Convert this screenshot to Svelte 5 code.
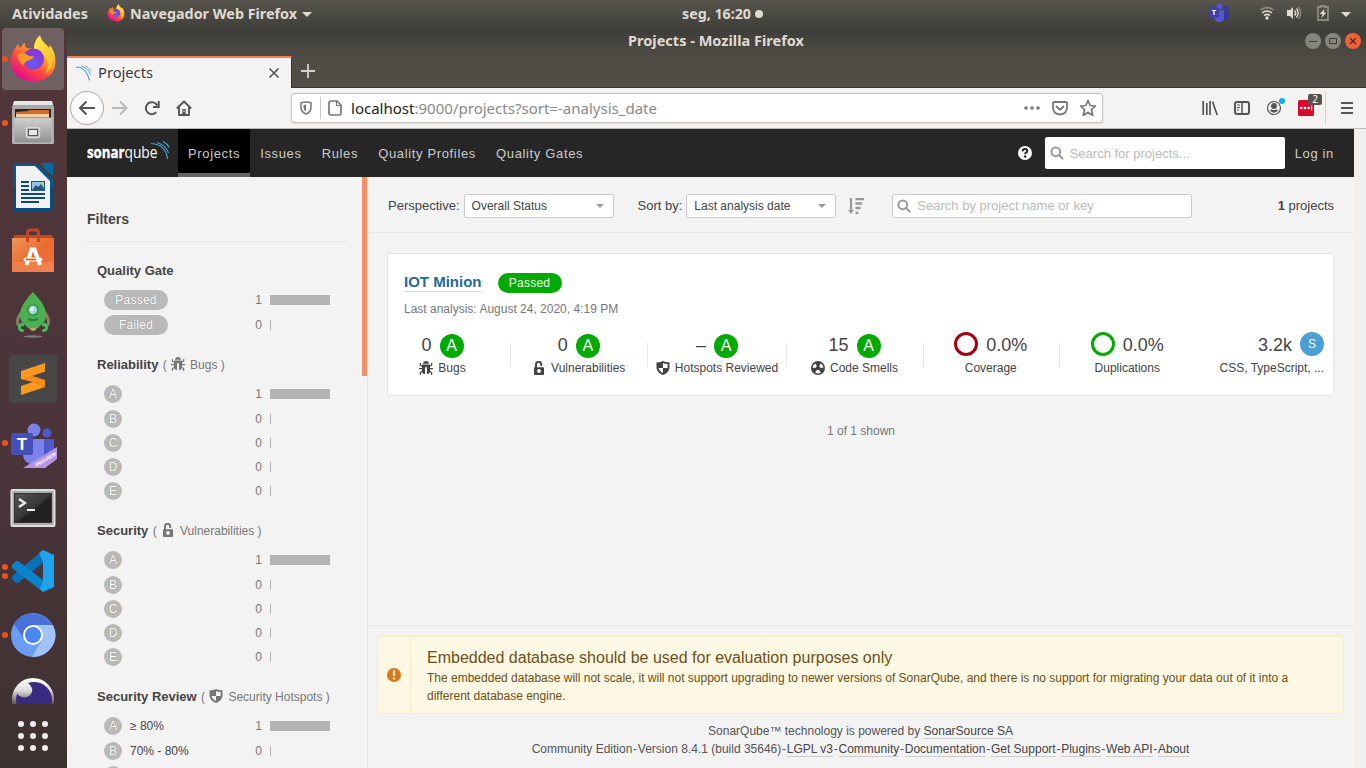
<script>
  const nav = ['Projects', 'Issues', 'Rules', 'Quality Profiles', 'Quality Gates'];
  const letters = ['A', 'B', 'C', 'D', 'E'];
  const ratingRows = letters.map((l, i) => ({ rating: l, count: i === 0 ? 1 : 0 }));
  const facets = [
    { title: 'Quality Gate', rows: [{ level: 'Passed', count: 1 }, { level: 'Failed', count: 0 }] },
    { title: 'Reliability', icon: 'bug', metric: 'Bugs', rows: ratingRows },
    { title: 'Security', icon: 'lock', metric: 'Vulnerabilities', rows: ratingRows },
    {
      title: 'Security Review', icon: 'shield', metric: 'Security Hotspots',
      rows: [
        { rating: 'A', label: '≥ 80%', count: 1 },
        { rating: 'B', label: '70% - 80%', count: 0 },
        { partial: true }
      ]
    }
  ];
  const measures = [
    { value: '0', rating: 'A', icon: 'bug', label: 'Bugs' },
    { value: '0', rating: 'A', icon: 'lock', label: 'Vulnerabilities' },
    { value: '–', rating: 'A', icon: 'shield', label: 'Hotspots Reviewed' },
    { value: '15', rating: 'A', icon: 'smell', label: 'Code Smells' },
    { value: '0.0%', ring: '#a4030f', label: 'Coverage' },
    { value: '0.0%', ring: '#00aa00', label: 'Duplications' }
  ];
  const links = ['LGPL v3', 'Community', 'Documentation', 'Get Support', 'Plugins', 'Web API', 'About'];
  const dock = [
    { name: 'firefox', dots: 1, active: true },
    { name: 'files', dots: 1 },
    { name: 'writer', dots: 0 },
    { name: 'software', dots: 0 },
    { name: 'rocket', dots: 0 },
    { name: 'sublime', dots: 0 },
    { name: 'teams', dots: 1 },
    { name: 'terminal', dots: 0 },
    { name: 'code', dots: 2 },
    { name: 'chromium', dots: 1 },
    { name: 'eclipse', dots: 0 }
  ];
</script>

{#snippet sysText(text, width, size, weight, color)}
  <svg class="systext" {width} height="20" role="img">
    <text x="0" y="14.500" textLength={width} lengthAdjust="spacingAndGlyphs" font-size={size} font-weight={weight} fill={color}>{text}</text>
  </svg>
{/snippet}

{#snippet firefox(size)}
  <svg width={size} height={size} viewBox="0 0 48 48">
    <defs>
      <linearGradient id="ffbody" x1=".85" y1=".1" x2=".25" y2=".95">
        <stop offset="0" stop-color="#fff14a" /><stop offset=".35" stop-color="#ffa51f" />
        <stop offset=".65" stop-color="#ff4a3f" /><stop offset="1" stop-color="#e00d8c" />
      </linearGradient>
      <radialGradient id="ffglobe" cx=".45" cy=".7" r=".7">
        <stop offset="0" stop-color="#6a5cf0" /><stop offset="1" stop-color="#8f2fd6" />
      </radialGradient>
      <linearGradient id="fftail" x1="0" y1="0" x2="1" y2="1">
        <stop offset="0" stop-color="#fff04f" /><stop offset="1" stop-color="#ffb52a" />
      </linearGradient>
    </defs>
    <path d="M4 17C6 14 7 12 8.500 9c1 2 2 3 3.500 3.500 1-2 2-3.500 4-4.500 0 2 0 3.500 1 5l8 1C25 8 28 2 31 .5c1 6 6 8 9 12.500 1-1 1-2 .5-3.500 5 6 7 14 5.500 21.500-2 10-11 15.500-22 15.500C11 46.500 1.500 38 1.500 26c0-4 1-6 2.500-9z" fill="url(#ffbody)" />
    <path d="M31 .5c1 6 6 8 9 12.500 5 9 5 20-3 25 3-8 2-14-2-18-4-4-7-3-10-6 0-5 2-10 6-13.500z" fill="url(#fftail)" />
    <circle cx="24.500" cy="24" r="10.500" fill="url(#ffglobe)" />
    <path d="M8 20c3-2 6-2 9-1l3 2 5 .5c-1 3-4 3-6 4-3 1-4 3-4 5-4-2-6-6-7-10.500z" fill="#ff9a26" />
  </svg>
{/snippet}

{#snippet teams(size, dark)}
  <svg width={size} height={size} viewBox="0 0 48 48">
    <circle cx="38" cy="12" r="4.500" fill={dark ? '#3436a0' : '#5059c9'} />
    <path d="M32 18h13v14c0 5-5 8-10 7z" fill={dark ? '#3436a0' : '#5059c9'} />
    <circle cx="25" cy="9" r="6.500" fill={dark ? '#5558cf' : '#7b83eb'} />
    <path d="M14 18h21v15c0 14-21 14-21 0z" fill={dark ? '#5558cf' : '#7b83eb'} />
    <rect x="2" y="12" width="22" height="22" rx="2" fill={dark ? '#3c3fae' : '#464eb8'} />
    <text x="13" y="29" text-anchor="middle" font-family="Liberation Sans, sans-serif" font-weight="700" font-size="17" fill="#fff">T</text>
    {#if !dark}
      <path d="M14 47 48 26v12L36 47z" fill="#b794e6" />
      <text transform="translate(28 46) rotate(-32)" font-family="Liberation Sans, sans-serif" font-weight="700" font-size="5" fill="#fff">PREVIEW</text>
    {/if}
  </svg>
{/snippet}

{#snippet sonarIcon(name)}
  <svg class="sicon" width="14" height="14" viewBox="0 0 14 14" fill="currentColor">
    {#if name === 'bug'}
      <path d="M4 2.800C4.200 1 5.400 0 7 0s2.800 1 3 2.800z" />
      <path d="M3 3.600h8v6.500c0 1.800-1 3-2.500 3H8V6.200H6v6.900h-.5c-1.500 0-2.500-1.200-2.500-3z" />
      <path d="M1.300 2v2.200l2 1M12.700 2v2.200l-2 1M0 7.700h3.500M10.500 7.700H14M3.500 10.200l-2.100 1.300V14M10.500 10.200l2.100 1.300V14" fill="none" stroke="currentColor" stroke-width="1.200" />
    {:else if name === 'lock'}
      <path d="M4 7V3.500a2.600 2.600 0 0 1 5.200 0v1.400" fill="none" stroke="currentColor" stroke-width="1.900" />
      <path fill-rule="evenodd" d="M2.800 6.200h8.400q.8 0 .8.800v6.200q0 .8-.8.800H2.800q-.8 0-.8-.8V7q0-.8.800-.8zM7 8.100a1.900 1.900 0 1 0 0 3.800 1.900 1.900 0 0 0 0-3.800z" />
    {:else if name === 'shield'}
      <path fill-rule="evenodd" d="M7 0c2 1 4 1.500 6.500 1.300v4.900C13.500 10 10.600 12.500 7 14 3.400 12.500.5 10 .5 6.200V1.300C3 1.500 5 1 7 0zM7 2v5h4.600V3.100C9.800 3.100 8.500 2.700 7 2zm0 5H2.500c.5 2.100 2.200 3.800 4.500 4.900z" />
    {:else}
      <path fill-rule="evenodd" d="M7 0a7 7 0 1 1 0 14A7 7 0 0 1 7 0zM4.200 2.400A5.500 5.500 0 0 0 1.500 6.700h3.400c.1-.8.500-1.400 1-1.700zM9.800 2.400 8.100 5c.6.400.9 1 1 1.700h3.400a5.500 5.500 0 0 0-2.700-4.300zM5.900 8.700l-1.700 3c1.700 1 3.900 1 5.600 0l-1.700-3c-.7.400-1.500.4-2.200 0z" />
      <circle cx="7" cy="6.900" r="1.200" />
    {/if}
  </svg>
{/snippet}

{#snippet magnifier()}
  <svg width="14" height="14" viewBox="0 0 14 14" fill="none" stroke="#999" stroke-width="2">
    <circle cx="5.800" cy="5.800" r="4.400" /><path d="m9 9 3.600 3.600" stroke-linecap="round" />
  </svg>
{/snippet}

<div class="desktop">
  <header class="topbar">
    <div class="top-left">
      {@render sysText('Atividades', 76, 14, 700, '#dfdbd2')}
      {@render firefox(18)}
      {@render sysText('Navegador Web Firefox', 167, 14, 700, '#dfdbd2')}
      <i class="caret-light"></i>
    </div>
    <div class="clock">{@render sysText('seg, 16:20', 69, 14, 700, '#dfdbd2')}<i class="dot-light"></i></div>
    <div class="tray">
      {@render teams(22, true)}
      <svg class="wifi" width="16" height="16" viewBox="0 0 16 16" fill="none" stroke-width="1.700">
        <path d="M1.500 5.200a9.500 9.500 0 0 1 13 0" stroke="#8b8980" />
        <path d="M3.200 8a6.800 6.800 0 0 1 9.600 0M5.200 10.600a4 4 0 0 1 5.600 0" stroke="#dfdbd2" />
        <circle cx="8" cy="13" r="1.700" fill="#dfdbd2" />
      </svg>
      <svg class="sound" width="16" height="16" viewBox="0 0 16 16" fill="none" stroke-width="1.400">
        <path d="M1 5h3l3-3v12l-3-3H1z" fill="#dfdbd2" />
        <path d="M8.700 5.300q2 2.700 0 5.400M10.500 3.500q3.300 4.500 0 9" stroke="#dfdbd2" />
        <path d="M12.500 2q4.200 6 0 12" stroke="#8b8980" />
      </svg>
      <svg class="battery" width="12" height="16" viewBox="0 0 12 16">
        <path d="M4 2V1h4v1h3v13H1V2z" fill="none" stroke="#8b8980" stroke-width="1.800" />
        <path d="M7.500 4 2.600 9h2.800l-1 4L9.400 7.600H6.800z" fill="#dfdbd2" />
      </svg>
      <i class="caret-light"></i>
    </div>
  </header>

  <aside class="dock">
    <div class="dock-list">
      {#each dock as app}
        <div class="dock-item" class:active={app.active}>
          <span class="dots">{#each Array(app.dots) as _}<i></i>{/each}</span>
          {#if app.name === 'firefox'}
            {@render firefox(48)}
          {:else if app.name === 'files'}
            <svg width="48" height="48" viewBox="0 0 48 48">
              <defs><linearGradient id="fil" x1="0" y1="0" x2="0" y2="1"><stop offset="0" stop-color="#d0d0d0" /><stop offset="1" stop-color="#8f8f8f" /></linearGradient></defs>
              <path d="M5 3h38l2 5v36q0 1-1 1H4q-1 0-1-1V8z" fill="#a8a8a8" /><path d="M5 2h38l1 4H4z" fill="#e6e6e6" />
              <path d="M6 10h36v10H6z" fill="#29241f" /><path d="M7 13l12-1 1-1h20v8H7z" fill="#d36c28" /><path d="M7 15h33v3H7z" fill="#f7cf9c" />
              <path d="M5 19h38v25H5z" fill="url(#fil)" stroke="#bdbdbd" />
              <rect x="17.500" y="28.500" width="13" height="10" rx="2" fill="#aaa" stroke="#d9d9d9" stroke-width="1.500" /><rect x="19.500" y="30.500" width="9" height="6" fill="#e9e9e9" stroke="#555" />
            </svg>
          {:else if app.name === 'writer'}
            <svg width="48" height="48" viewBox="0 0 48 48">
              <path d="M6 0h20l18 16v30q0 2-2 2H6q-2 0-2-2V2q0-2 2-2z" fill="#0a4b78" /><path d="M6 0h20l18 16v8H4V2q0-2 2-2z" fill="#0a5d96" opacity=".7" /><path d="M32 0h11q1 0 1 1v11q-7-2-12-12z" fill="#0369a3" />
              <path d="M7 3h19l15 15v27H7z" fill="#f1f1f1" />
              <path d="M12 19h8M12 23h8M12 27h8M12 31h24M12 35h24M12 39h18" stroke="#0a4b78" stroke-width="2" /><rect x="22.500" y="18.500" width="13" height="9" fill="#8fc5e8" stroke="#0a5d96" /><path d="m23 27 4-5 2 2 3-3 4 6z" fill="#33506a" /><circle cx="33.500" cy="20.500" r="1.300" fill="#f3c544" />
            </svg>
          {:else if app.name === 'software'}
            <svg width="48" height="48" viewBox="0 0 48 48">
              <defs><linearGradient id="sw" x1="0" y1="0" x2="1" y2="1"><stop offset="0" stop-color="#ea9a5e" /><stop offset=".5" stop-color="#ec6a30" /><stop offset="1" stop-color="#f0733c" /></linearGradient></defs>
              <path d="m4 12 1-4h38l1 4z" fill="#c64a18" /><path d="M3 11h42v34H3z" fill="url(#sw)" /><path d="M3 35h42v10H3z" fill="#f18a58" opacity=".6" />
              <path d="M18.500 15V6q0-3 3-3h5q3 0 3 3v9" fill="none" stroke="#c8451b" stroke-width="3" />
              <path d="m17.500 38 5-15.500h3L31 38" fill="none" stroke="#fff" stroke-width="4" /><path d="M16.500 32.500h15" stroke="#fff" stroke-width="4" stroke-linecap="round" /><path d="M17 32.500h10" stroke="#e95e1f" stroke-width="1.800" />
            </svg>
          {:else if app.name === 'rocket'}
            <svg width="48" height="48" viewBox="0 0 48 48">
              <ellipse cx="24" cy="45.500" rx="9.500" ry="1.200" fill="#857a80" />
              <path d="M12 22q-6 8-2 13M36 22q6 8 2 13" fill="none" stroke="#8a7f5e" stroke-width="3" />
              <path d="M20 36h8q0 3-4 4-4-1-4-4z" fill="#b5a66b" /><path d="M24 1C12 13 8 23 13 31l6 6h10l6-6C40 23 36 13 24 1z" fill="#4caf50" /><path d="M13 31 8 35l6-1zM35 31l5 4-6-1z" fill="#3f9f48" />
              <circle cx="24" cy="19" r="5" fill="#9edfd4" stroke="#317c46" stroke-width="1.200" /><circle cx="23" cy="18" r="2" fill="#dffaf4" /><path d="M19.500 28q4.500 2 9 0" fill="none" stroke="#276b38" stroke-width="2" stroke-dasharray="2 .5" />
              <path d="M15 34q-5-1-4.500 3 1 3.500 4 2M33 34q5-1 4.500 3-1 3.500-4 2" fill="none" stroke="#45c05c" stroke-width="3" />
            </svg>
          {:else if app.name === 'sublime'}
            <svg width="48" height="48" viewBox="0 0 48 48">
              <rect width="48" height="48" rx="3" fill="#474747" /><path d="m12 16 24-8v8.500l-13 4.500 13 4v7L12 40v-9l12-4-12-3z" fill="#ff9820" /><path d="m12 24 12 3 11 5 1-.5V25l-12.500-4z" fill="#f58310" opacity=".6" />
            </svg>
          {:else if app.name === 'teams'}
            <div class="lower">{@render teams(48, false)}</div>
          {:else if app.name === 'terminal'}
            <svg width="48" height="48" viewBox="0 0 48 48">
              <defs><linearGradient id="tm" x1="0" y1="0" x2="1" y2="1"><stop offset="0" stop-color="#555" /><stop offset=".5" stop-color="#383838" /><stop offset=".55" stop-color="#222" /></linearGradient></defs>
              <rect x="2.500" y="7" width="43" height="36" rx="1" fill="#aaa" stroke="#dedede" stroke-width="2" /><rect x="5.500" y="10.500" width="37" height="29" fill="url(#tm)" stroke="#333" />
              <path d="m10 16 6 4-6 4" fill="none" stroke="#eee" stroke-width="2.200" /><path d="M18 27h8" stroke="#eee" stroke-width="2" />
            </svg>
          {:else if app.name === 'code'}
            <svg width="48" height="48" viewBox="0 0 48 48">
              <path d="M34 3 3 29v3l4 4h2l25-20z" fill="#0b70b5" /><path d="m3 18 4-4h2l25 19v12L3 21z" fill="#0b84cb" /><path d="m34 3 11 5v32l-11 5-3-3 3-8V15L30 6z" fill="#20a3ee" />
            </svg>
          {:else if app.name === 'chromium'}
            <svg width="48" height="48" viewBox="0 0 48 48">
              <circle cx="24" cy="24" r="22" fill="#6b9df5" /><path d="M5 13A22 22 0 0 1 43 14H24l-9 14z" fill="#4872d8" /><path d="M24 14h20a22 22 0 0 1-21 32l10-17z" fill="#a1c2fa" /><circle cx="24" cy="24" r="10" fill="#fff" /><circle cx="24" cy="24" r="8" fill="#4a87ee" />
            </svg>
          {:else}
            <svg width="48" height="48" viewBox="0 0 48 48">
              <defs><linearGradient id="fade" gradientUnits="userSpaceOnUse" x1="0" y1="3" x2="0" y2="28"><stop offset="0" stop-color="#fff" /><stop offset=".5" stop-color="#ddd" /><stop offset="1" stop-color="#6d5a60" /></linearGradient></defs>
              <circle cx="24" cy="24" r="21" fill="url(#fade)" /><circle cx="25" cy="25" r="18" fill="#3a2a80" /><path d="M8 18C9 12 14 8 18 7c4 3 6 7 5 10-2 6-9 7-14 3z" fill="url(#fade)" />
            </svg>
          {/if}
        </div>
      {/each}
    </div>
    <div class="apps">{#each Array(9) as _}<i></i>{/each}</div>
  </aside>

  <div class="window">
    <div class="titlebar">
      {@render sysText('Projects - Mozilla Firefox', 176, 14, 700, '#dfdbd2')}
      <div class="controls">
        <svg width="16" height="16" viewBox="0 0 16 16"><circle cx="8" cy="8" r="8" fill="#86847d" /><path d="M4 8.500h8" stroke="#3c3b37" /></svg>
        <svg width="16" height="16" viewBox="0 0 16 16"><circle cx="8" cy="8" r="8" fill="#86847d" /><path d="M4.500 5.500h7v5h-7z" fill="none" stroke="#3c3b37" /></svg>
        <svg width="16" height="16" viewBox="0 0 16 16"><circle cx="8" cy="8" r="8" fill="#ef6236" /><path d="m5 5 6 6m0-6-6 6" stroke="#4b2a1c" stroke-width="1.200" /></svg>
      </div>
    </div>
    <div class="tabs">
      <div class="tab">
        <svg width="16" height="16" viewBox="0 0 16 16" fill="none" stroke="#4b9fd5"><path d="M0 2q10 0 13.500 13.500" stroke-width="1.200" /><path d="M5 1q7 2 9.500 9M9.500 1q3 1.500 5.500 5" stroke-width=".9" /></svg>
        {@render sysText('Projects', 55, 14, 400, '#3a3a3a')}
        <svg class="close" width="12" height="12" viewBox="0 0 12 12"><path d="m1.500 1.500 9 9m0-9-9 9" stroke="#555" stroke-width="1.600" /></svg>
      </div>
      <svg class="plus" width="14" height="14" viewBox="0 0 14 14"><path d="M7 0v14M0 7h14" stroke="#d5d2ca" stroke-width="1.800" /></svg>
    </div>
    <div class="toolbar">
      <div class="back"><svg width="18" height="16" viewBox="0 0 18 16" fill="none" stroke="#555" stroke-width="2"><path d="M17 8H2.500M8.500 1.500 2 8l6.500 6.500" /></svg></div>
      <svg class="fwd" width="16" height="16" viewBox="0 0 16 16" fill="none" stroke="#b9b8b6" stroke-width="2"><path d="M0 8h14M8 1.500 14.500 8 8 14.500" /></svg>
      <svg class="reload" width="16" height="16" viewBox="0 0 16 16" fill="none" stroke="#555" stroke-width="2"><path d="M12.300 12.200A6 6 0 1 1 13.200 5.500" /><path d="M14.700 1v6H9" /></svg>
      <svg class="home" width="16" height="16" viewBox="0 0 16 16" fill="none" stroke="#555" stroke-width="1.900"><path d="M.8 8.500 8 1.500l7.200 7M3 7v8h10V7" stroke-linejoin="round" /><path d="M6.300 9h3.400v6H6.300z" fill="#555" stroke="none" /><path d="M8 10v2" stroke="#eee" stroke-width="1" /></svg>
      <div class="url">
        <svg width="14" height="14" viewBox="0 0 14 14"><path d="M7 1q3 0 5 1v4q0 5-5 7-5-2-5-7V2q2-1 5-1z" fill="none" stroke="#777" stroke-width="1.500" /><path d="M7 3.500v7q-2.500-1.500-2.500-4.500V4z" fill="#777" /></svg>
        <i class="usep"></i>
        <svg class="page" width="14" height="16" viewBox="0 0 14 16" fill="none" stroke="#777" stroke-width="1.700"><path d="M3 1h6l4 4v8.500q0 1.500-1.500 1.500H2.500Q1 15 1 13.500V3q0-2 2-2z" /><path d="M8.500 1v4.500H13" stroke-width="1.200" /></svg>
        <svg class="systext" width="306" height="20"><text x="0" y="16" textLength="306" lengthAdjust="spacingAndGlyphs" font-size="14.500" fill="#898989"><tspan fill="#222">localhost</tspan>:9000/projects?sort=-analysis_date</text></svg>
        <span class="uacts">
          <svg width="16" height="16" viewBox="0 0 16 16" fill="#777"><circle cx="2" cy="8" r="1.800" /><circle cx="8" cy="8" r="1.800" /><circle cx="14" cy="8" r="1.800" /></svg>
          <svg width="16" height="16" viewBox="0 0 16 16" fill="none" stroke="#777" stroke-width="1.800"><path d="M2.500 2h11Q15 2 15 3.500V7q0 7-7 7.500Q1 14 1 7V3.500Q1 2 2.500 2z" /><path d="M4.500 6.500 8 9.700l3.500-3.200" stroke-linecap="round" /></svg>
          <svg width="18" height="18" viewBox="0 0 18 18" fill="none" stroke="#777" stroke-width="1.700" stroke-linejoin="round"><path d="m9 1.500 2.200 5 5.300.5-4 3.700 1.200 5.500L9 13.400l-4.700 2.800 1.200-5.500-4-3.700 5.300-.5z" /></svg>
        </span>
      </div>
      <div class="tools">
        <svg width="16" height="16" viewBox="0 0 16 16" stroke="#555" stroke-width="1.700"><path d="M1.200 1v14M4.800 3v12M8 1v14M10.500 1.500 15.200 15" /></svg>
        <svg width="16" height="14" viewBox="0 0 16 14" fill="none" stroke="#555"><rect x="1" y="1" width="14" height="12" rx="2" stroke-width="2" /><path d="M8 1v12" stroke-width="1.500" /><path d="M3 4h3M3 6.500h3M3 9h2" /></svg>
        <svg width="20" height="20" viewBox="0 0 20 20"><circle cx="8" cy="10" r="6.500" fill="none" stroke="#555" stroke-width="1.200" /><circle cx="8" cy="8" r="2.900" fill="#555" /><path d="M4 12.300q1-1 2-.8 2 1 4 0 1-.2 2 .8-1.500 2.400-4 2.400t-4-2.400z" fill="#555" /><circle cx="16" cy="3" r="3" fill="#00b3f4" /></svg>
        <div class="ext"><svg width="16" height="16" viewBox="0 0 16 16"><rect width="16" height="16" rx="1.500" fill="#d80a2c" /><circle cx="3.300" cy="8" r="1.300" fill="#fff" /><circle cx="7" cy="8" r="1.300" fill="#fff" /><circle cx="10.700" cy="8" r="1.300" fill="#fff" /><path d="M13.700 5.500v5" stroke="#fff" /></svg><b>2</b></div>
        <i class="tsep"></i>
        <svg width="12" height="12" viewBox="0 0 12 12" stroke="#555" stroke-width="2"><path d="M0 1h12M0 6h12M0 11h12" /></svg>
      </div>
    </div>

    <div class="viewport">
      <div class="page-wrap">
        <nav class="nav">
          <svg class="logo" width="84" height="28" viewBox="0 0 84 28">
            <g font-family="Open Sans, sans-serif" fill="#fff" letter-spacing="0">
              <text x="0" y="19" textLength="37.500" lengthAdjust="spacingAndGlyphs" font-weight="700" font-size="15.500" stroke="#fff" stroke-width=".4">sonar</text>
              <text x="37.500" y="19" textLength="33" lengthAdjust="spacingAndGlyphs" font-weight="400" font-size="16">qube</text>
            </g>
            <path d="M64 4.500q15 1 16.500 15.500M70 3.500q9 3 11.500 10.500M76 2.500q4 2 6.500 6" fill="none" stroke="#4b9fd5" stroke-width="1.200" />
          </svg>
          {#each nav as item, i}<a class:current={i === 0}>{item}</a>{/each}
          <div class="nav-right">
            <svg width="14" height="14" viewBox="0 0 14 14"><circle cx="7" cy="7" r="7" fill="#fff" /><path d="M4.600 5.300q.2-2.200 2.400-2.200 2.300 0 2.300 1.900 0 1-1.200 1.700-.9.500-.9 1.500" fill="none" stroke="#262626" stroke-width="2" /><circle cx="7.200" cy="10.500" r="1.200" fill="#262626" /></svg>
            <div class="gsearch">{@render magnifier()}<span>Search for projects...</span></div>
            <span class="login">Log in</span>
          </div>
        </nav>

        <div class="body">
          <aside class="side">
            <h2>Filters</h2>
            {#each facets as f}
              <section class="facet" class:levels={!f.metric}>
                <h3>{f.title}{#if f.metric}<span class="sub">&nbsp;( {@render sonarIcon(f.icon)}<em>{f.metric} )</em></span>{/if}</h3>
                {#each f.rows as r}
                  <div class="row">
                    {#if r.partial}
                      <span class="small-rating"></span>
                    {:else}
                      {#if r.level}<span class="level muted">{r.level}</span>{:else}<span class="small-rating">{r.rating}</span>{/if}
                      {#if r.label}<span class="rlabel">{r.label}</span>{/if}
                      <span class="count">{r.count}</span>
                      <span class="track"><i style="width:{r.count ? 60 : 1}px"></i></span>
                    {/if}
                  </div>
                {/each}
              </section>
            {/each}
          </aside>
          <div class="side-scroll"><i></i></div>

          <main>
            <div class="filters-bar">
              <span>Perspective:</span><div class="select s1">Overall Status<i></i></div>
              <span>Sort by:</span><div class="select">Last analysis date<i></i></div>
              <svg class="sort" width="16" height="16" viewBox="0 0 16 16" stroke="#999" fill="none"><path d="M3 0v13" stroke-width="2.200" /><path d="M0 12h6l-3 4z" fill="#999" stroke="none" /><path d="M7.500 1H16M7.500 5.500H14M7.500 10h5M7.500 14.800h3" stroke-width="2.300" /></svg>
              <div class="psearch">{@render magnifier()}<span>Search by project name or key</span></div>
              <span class="total"><b>1</b> projects</span>
            </div>

            <article class="card">
              <div class="card-title"><a>IOT Minion</a><span class="level ok">Passed</span></div>
              <p>Last analysis: August 24, 2020, 4:19 PM</p>
              <div class="measures">
                {#each measures as m}
                  <div class="measure">
                    <div class="value">
                      {#if m.ring}<span class="ring" style="border-color:{m.ring}"></span>{/if}
                      <span class="num">{m.value}</span>
                      {#if m.rating}<span class="rating">{m.rating}</span>{/if}
                    </div>
                    <div class="mlabel">{#if m.icon}{@render sonarIcon(m.icon)}{/if}{m.label}</div>
                  </div>
                {/each}
                <div class="measure last">
                  <div class="value"><span class="num">3.2k</span><span class="size">S</span></div>
                  <div class="mlabel">CSS, TypeScript, ...</div>
                </div>
              </div>
            </article>
            <p class="shown">1 of 1 shown</p>

            <footer>
              <div class="alert">
                <div class="alert-icon"><svg width="14" height="14" viewBox="0 0 14 14"><circle cx="7" cy="7" r="7" fill="#db781a" /><path d="M5.900 2.200h2.200v5.600H5.900zM5.900 9.300h2.200v2.200H5.900z" fill="#fdf6e0" /></svg></div>
                <div class="alert-text">
                  <h4>Embedded database should be used for evaluation purposes only</h4>
                  <p>The embedded database will not scale, it will not support upgrading to newer versions of SonarQube, and there is no support for migrating your data out of it into a different database engine.</p>
                </div>
              </div>
              <div class="credits">
                <div>SonarQube™ technology is powered by <a>SonarSource SA</a></div>
                <div class="spaced">Community Edition<s> - </s>Version 8.4.1 (build 35646){#each links as l}<s> - </s><a>{l}</a>{/each}</div>
              </div>
            </footer>
          </main>
        </div>
      </div>
    </div>
  </div>
</div>

<style>
  :global(body) { margin: 0; overflow: hidden; }
  * { box-sizing: border-box; }
  svg { display: block; flex: none; }
  h2, h3, h4, p { margin: 0; }
  .desktop { width: 1366px; height: 768px; overflow: hidden; display: grid; grid-template: 28px 740px / 67px 1299px; font: 13px/20px "Liberation Sans", Arial, sans-serif; color: #444; }
  .systext { overflow: visible; font-family: "Noto Sans", sans-serif; }
  .topbar { grid-column: 1 / 3; display: grid; grid-template-columns: 682px auto 1fr; align-items: center; background: linear-gradient(#57554d, #403f3a); }
  .top-left { display: flex; align-items: center; padding-left: 12px; }
  .top-left > :global(svg:nth-child(2)) { margin: 0 5px 2px 19px; }
  .caret-light { border: 5px solid transparent; border-top-color: #dfdbd2; border-bottom: 0; margin-left: 5px; }
  .clock { display: flex; align-items: center; gap: 4px; padding-bottom: 1px; }
  .dot-light { width: 8px; height: 8px; border-radius: 50%; background: #dfdbd2; }
  .tray { display: flex; align-items: center; justify-content: flex-end; padding-right: 15px; }
  .tray > svg { margin-bottom: 2px; }
  .tray > .wifi { margin-left: 29px; }
  .tray > .sound { margin-left: 11px; }
  .tray > .battery { margin: 0 7px 2px 15px; }

  .dock { background: linear-gradient(#513639, #4a343a 60%, #3e3231); display: flex; flex-direction: column; }
  .dock-list { height: 676px; overflow: hidden; display: flex; flex-direction: column; }
  .dock-item { height: 62px; flex: none; margin: 0 3px 2px 2px; border-radius: 4px; display: flex; align-items: center; justify-content: center; position: relative; }
  .dock-item.active { background: #716062; }
  .lower { padding-top: 4px; }
  .dots { position: absolute; left: 0; display: flex; flex-direction: column; gap: 3px; }
  .dots i { width: 6px; height: 6px; border-radius: 50%; background: #e95420; }
  .apps { display: grid; grid-template-columns: repeat(3, 6px); gap: 6px; padding: 17px 0 0 18px; }
  .apps i { width: 6px; height: 6px; border-radius: 50%; background: #eee; }

  .window { display: flex; flex-direction: column; min-width: 0; }
  .titlebar { height: 28px; display: grid; place-items: center; grid-template-columns: 60px 1fr 60px; background: linear-gradient(#3d3c38, #4c4a43 85%); padding: 0 1px 2px 0; }
  .titlebar > :global(svg) { grid-column: 2; }
  .controls { display: flex; gap: 4px; margin-right: 4px; }
  .tabs { height: 32px; background: #504d46; border-bottom: 1px solid #38362f; display: flex; align-items: center; }
  .tab { width: 225px; height: 32px; align-self: flex-start; background: #f4f3f2; border-top: 2px solid #f0804f; border-right: 1px solid #38362f; display: flex; align-items: center; padding: 0 11px 1px 9px; gap: 6px; position: relative; }
  .tab .close { margin-left: auto; }
  .plus { margin: 0 0 1px 9px; }
  .toolbar { height: 41px; background: #f4f3f2; border-bottom: 1px solid #bcbab8; display: flex; align-items: center; padding-left: 3px; }
  .back { width: 34px; height: 34px; border: 1px solid #aaa9a7; border-radius: 50%; background: #fdfdfd; display: grid; place-items: center; }
  .fwd { margin-left: 8px; }
  .reload { margin-left: 16px; }
  .home { margin-left: 16px; }
  .url { width: 812px; height: 30px; margin-left: 99px; border: 1px solid #c6c4c2; border-radius: 3px; background: #fff; box-shadow: 0 1px 2px #ddd; display: flex; align-items: center; padding: 0 5px 0 7px; }
  .usep { width: 1px; height: 22px; background: #c8c8c8; margin: 0 7px; }
  .page { margin-right: 9px; }
  .uacts { margin-left: auto; display: flex; align-items: center; gap: 11px; }
  .uacts svg:first-child { margin-right: 1px; }
  .tools { flex: 1; display: flex; align-items: center; padding: 0 13px 0 99px; gap: 16px; }
  .tools > svg:nth-of-type(3) { margin-right: -4px; }
  .ext { position: relative; }
  .ext b { position: absolute; left: 10px; top: -6px; width: 14px; height: 11px; background: #56534f; border-radius: 2px; color: #fff; font: 10px/11px "Noto Sans", sans-serif; text-align: center; }
  .tsep { width: 1px; height: 34px; background: #d3d1cf; margin-left: -5px; margin-right: -1px; }

  .viewport { flex: 1; background: #f1f0ee; min-height: 0; }
  .page-wrap { width: 1287px; height: 639px; background: #f3f3f3; overflow: hidden; }
  .nav { height: 48px; background: #262626; display: flex; letter-spacing: .65px; color: #ccc; }
  .logo { margin: 10px 7px 0 20px; }
  .nav a { padding: 0 10px; line-height: 49px; }
  .nav a.current { background: #000; color: #ccc; border-bottom: 4px solid #666; }
  .nav-right { margin-left: auto; display: flex; align-items: center; }
  .gsearch { width: 240px; height: 32px; background: #fff; border-radius: 2px; margin: 0 10px 0 13px; display: flex; align-items: center; gap: 6px; padding-left: 5px; color: #bbb; letter-spacing: 0; }
  .gsearch span { padding-top: 1px; }
  .login { padding-right: 20px; padding-top: 1px; }

  .body { display: flex; height: 591px; }
  .side { width: 295px; padding: 32px 15px 0 20px; }
  .side h2 { font-size: 14px; line-height: 20px; height: 33px; border-bottom: 1px solid #e6e6e6; margin-bottom: 19px; }
  .facet { padding: 0 17px 18px 10px; }
  .facet.levels { padding-bottom: 17px; }
  .facet h3 { font-size: 13px; line-height: 20px; height: 20px; margin-bottom: 7px; display: flex; white-space: pre; }
  .sub { font-weight: 400; font-size: 12px; color: #777; display: flex; align-items: center; margin-left: 1px; }
  .sub .sicon { margin: -2px 0 0 1px; }
  .sub em { font-style: normal; margin-left: 5px; }
  .row { height: 24px; padding: 3px 0 0 7px; display: flex; line-height: 18px; font-size: 12px; }
  .row:nth-of-type(1), .levels .row { height: 25px; }
  .levels .row { padding-top: 2px; line-height: 20px; }
  .small-rating { width: 18px; height: 18px; border-radius: 50%; background: #b9b9b9; color: #fff; text-align: center; text-shadow: 0 0 1px #777; }
  .rlabel { margin-left: 8px; }
  .count { margin-left: auto; color: #777; }
  .track { width: 60px; margin: 4px 0 0 8px; }
  .levels .track { margin-top: 5px; }
  .track i { display: block; height: 10px; background: #b4b4b4; }
  .side-scroll { width: 6px; border-right: 1px solid #e6e6e6; }
  .side-scroll i { display: block; width: 5px; height: 199px; background: #f38f69; }
  .level { width: 64px; height: 20px; border-radius: 10px; background: #0a0; color: #fff; font-size: 12px; line-height: 20px; letter-spacing: .24px; text-align: center; }
  .level.muted { background: #b9b9b9; text-shadow: 0 0 1px #777; }
  .level.ok { padding-right: 1px; }

  main { width: 986px; display: flex; flex-direction: column; }
  .filters-bar { height: 56px; border-bottom: 1px solid #e6e6e6; display: flex; align-items: center; padding: 2px 20px 0 20px; }
  .select { width: 150px; height: 24px; border: 1px solid #ccc; border-radius: 2px; background: #fff; margin-left: 4px; padding: 0 9px 0 7px; display: flex; align-items: center; justify-content: space-between; font-size: 12px; }
  .select.s1 { margin-right: 24px; }
  .select i { border: 4px solid transparent; border-top-color: #999; border-bottom: 0; }
  .sort { margin: 0 28px 0 12px; }
  .psearch { width: 300px; height: 24px; border: 1px solid #ccc; border-radius: 2px; background: #fff; display: flex; align-items: center; gap: 6px; padding-left: 4px; color: #bbb; }
  .total { margin-left: auto; }
  .card { width: 947px; height: 143px; margin: 20px 0 0 19px; border: 1px solid #e6e6e6; border-radius: 2px; background: #fff; padding: 19px 9px 0 16px; }
  .card-title { display: flex; gap: 16px; height: 20px; }
  .card-title a { width: 78px; color: #236a97; border-bottom: 1px solid #cae3f2; font-size: 15px; font-weight: 700; line-height: 18px; height: 19px; white-space: nowrap; }
  .card p { font-size: 12px; color: #777; line-height: 18px; margin-top: 7px; }
  .measures { display: flex; margin: 12px 0 0 -16px; height: 48px; }
  .measure { width: 137px; text-align: center; position: relative; }
  .measure:first-child { width: 122px; padding-right: 13px; }
  .measure:nth-child(2) { padding-left: 1px; }
  .measure:nth-child(2), .measure:nth-child(5), .measure:nth-child(6) { width: 136.500px; }
  .measure:nth-child(3) { width: 139px; padding-left: 2px; }
  .measure:nth-child(4) { padding-left: 1px; }
  .measure:not(.last):not(:nth-child(6))::after { content: ""; position: absolute; right: -1px; top: 13px; height: 24px; width: 1px; background: #e6e6e6; }
  .value { display: flex; align-items: center; justify-content: center; gap: 8px; height: 24px; font-size: 18px; line-height: 24px; margin-top: 2px; }
  .value .num { margin-top: 1px; }
  .rating, .size { width: 24px; height: 24px; border-radius: 50%; background: #0a0; color: #fff; line-height: 24px; margin-top: 3px; text-align: center; font-size: 16px; }
  .ring { width: 24px; height: 24px; border: 3px solid; border-radius: 50%; }
  .size { background: #4b9fd5; font-size: 12px; margin-top: 0; }
  .mlabel { display: flex; align-items: center; justify-content: center; gap: 5px; font-size: 12px; line-height: 18px; margin-top: 3px; }
  .measure.last { width: auto; margin-left: auto; text-align: right; }
  .last .value { justify-content: flex-end; }
  .last .mlabel { justify-content: flex-end; }
  .shown { text-align: center; font-size: 12px; line-height: 18px; color: #777; margin-top: 26px; }
  footer { margin-top: auto; height: 143px; border-top: 1px solid #e6e6e6; padding: 10px 10px 0 9px; font-size: 12px; line-height: 18px; }
  .alert { height: 78px; border: 1px solid #faebcc; border-radius: 2px; background: #fcf8e3; color: #6f4f17; display: flex; }
  .alert-icon { flex: none; width: 33px; border-right: 1px solid #faebcc; display: grid; place-items: center; }
  .alert-text { padding: 10px 16px; }
  .alert-text h4 { font-size: 16px; font-weight: 400; line-height: 22px; }
  .credits { text-align: center; padding-top: 8px; color: #555; }
  .credits a { color: #444; border-bottom: 1px solid #ccc; }
  .spaced s { text-decoration: none; padding: 0 .75px; }
</style>
